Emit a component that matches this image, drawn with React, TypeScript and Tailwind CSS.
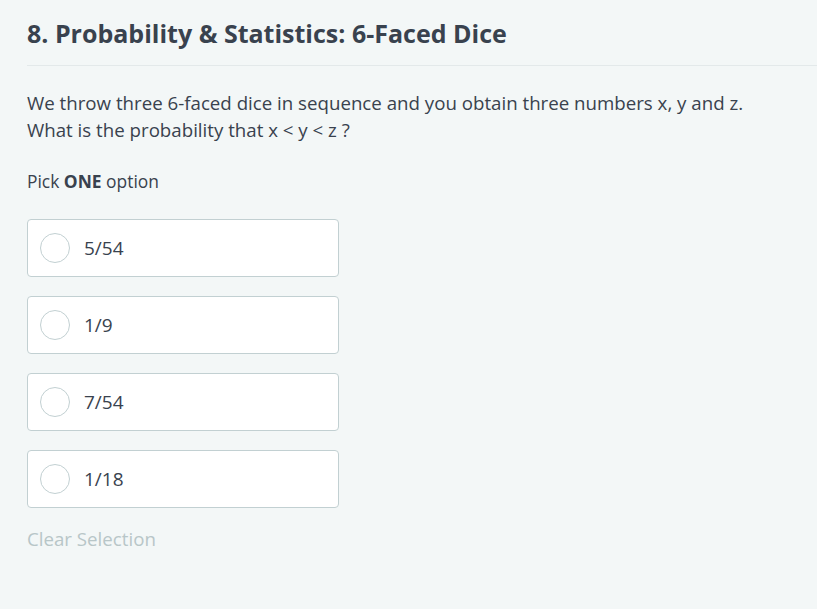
const options = ["5/54", "1/9", "7/54", "1/18"];

export default function App() {
  return (
    <main
      className="min-h-screen bg-[#f3f7f7] text-[#39424e]"
      style={{ fontFamily: '"Open Sans", sans-serif' }}
    >
      <div className="pl-[27px] pt-[15px]">
        <h1 className="border-b border-[#e3e9ea] pb-[13px] text-[25px] font-bold leading-[37px]">
          8. Probability &amp; Statistics: 6-Faced Dice
        </h1>

        <p className="mt-[23px] text-[18.7px] leading-[27px]">
          We throw three 6-faced dice in sequence and you obtain three numbers x, y and z.
          <br />
          What is the probability that x &lt; y &lt; z ?
        </p>

        <p className="mt-[26px] text-[17.4px] leading-[24px]">
          Pick <span className="font-bold">ONE</span> option
        </p>

        <div className="mt-[26px] flex w-[312px] flex-col gap-[19px]">
          {options.map((o) => (
            <label
              key={o}
              className="flex h-[58px] items-center gap-[14px] rounded-[4px] border border-[#c2d0d2] bg-white pl-[12px]"
            >
              <span className="h-[30px] w-[30px] rounded-full border border-[#c2d0d2] bg-white" />
              <span className="text-[19px]">{o}</span>
            </label>
          ))}
        </div>

        <button className="mt-[17px] text-[18.7px] leading-[27px] text-[#b8c6c8]">
          Clear Selection
        </button>
      </div>
    </main>
  );
}
